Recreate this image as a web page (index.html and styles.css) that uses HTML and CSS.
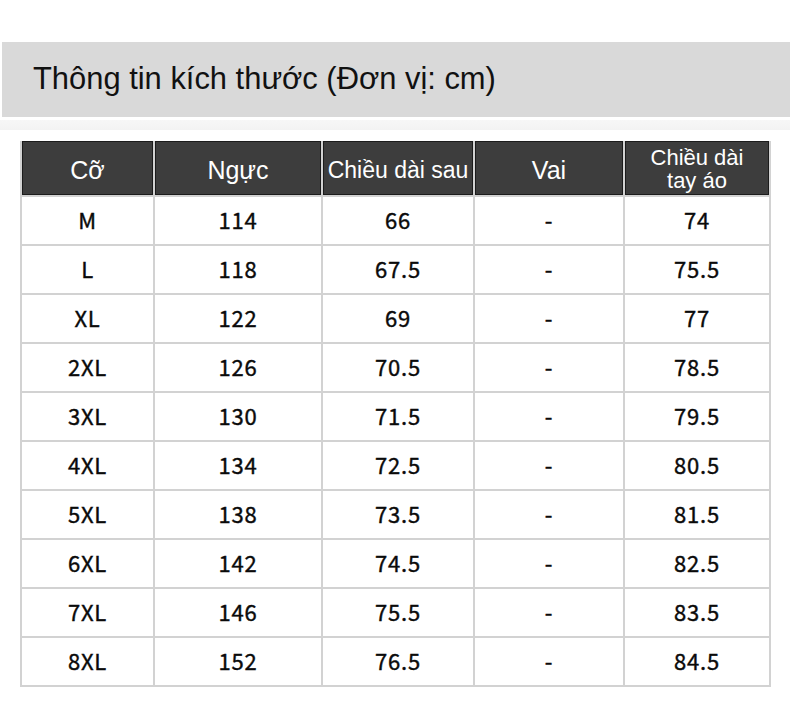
FILE: index.html
```html
<!DOCTYPE html>
<html lang="vi">
<head>
<meta charset="utf-8">
<title>Thông tin kích thước</title>
<link rel="stylesheet" href="styles.css">
</head>
<body>
<div class="page">
  <div class="title-band">
    <h1 class="title">Thông tin kích thước (Đơn vị: cm)</h1>
  </div>
  <div class="title-shadow"></div>
  <div class="size-table">
    <div class="th">Cỡ</div>
    <div class="th">Ngực</div>
    <div class="th th-sm">Chiều dài sau</div>
    <div class="th">Vai</div>
    <div class="th th-sm th-two">Chiều dài<br>tay áo</div>

    <div class="td">M</div><div class="td">114</div><div class="td">66</div><div class="td">-</div><div class="td">74</div>
    <div class="td">L</div><div class="td">118</div><div class="td">67.5</div><div class="td">-</div><div class="td">75.5</div>
    <div class="td">XL</div><div class="td">122</div><div class="td">69</div><div class="td">-</div><div class="td">77</div>
    <div class="td">2XL</div><div class="td">126</div><div class="td">70.5</div><div class="td">-</div><div class="td">78.5</div>
    <div class="td">3XL</div><div class="td">130</div><div class="td">71.5</div><div class="td">-</div><div class="td">79.5</div>
    <div class="td">4XL</div><div class="td">134</div><div class="td">72.5</div><div class="td">-</div><div class="td">80.5</div>
    <div class="td">5XL</div><div class="td">138</div><div class="td">73.5</div><div class="td">-</div><div class="td">81.5</div>
    <div class="td">6XL</div><div class="td">142</div><div class="td">74.5</div><div class="td">-</div><div class="td">82.5</div>
    <div class="td">7XL</div><div class="td">146</div><div class="td">75.5</div><div class="td">-</div><div class="td">83.5</div>
    <div class="td">8XL</div><div class="td">152</div><div class="td">76.5</div><div class="td">-</div><div class="td">84.5</div>
  </div>
</div>
</body>
</html>
```
FILE: styles.css
```css
* { box-sizing: border-box; }
html, body { margin: 0; padding: 0; background: #ffffff; }
.page {
  width: 790px;
  height: 708px;
  padding-top: 42px;
  overflow: hidden;
}
.title-band {
  margin-left: 2px;
  height: 75px;
  background: #d9d9d9;
  display: flex;
  align-items: center;
  padding-left: 31px;
}
.title {
  margin: 0;
  font-family: "Liberation Sans", Arial, sans-serif;
  font-weight: 400;
  font-size: 30.9px;
  color: #111111;
  padding-bottom: 1px;
}
.title-shadow {
  height: 10px;
  margin-top: 3px;
  background: linear-gradient(#f7f7f7, #f3f3f3);
}
.size-table {
  margin: 11px 0 0 20px;
  width: 751px;
  display: grid;
  grid-template-columns: 131px 166px 150px 148px 144px;
  grid-template-rows: 54px;
  grid-auto-rows: 47px;
  gap: 2px;
  padding: 0 2px 2px 2px;
  background: #d2d2d2;
}
.th {
  background: #3d3d3d;
  border: 1px solid #1c1c1c;
  color: #ffffff;
  font-family: "Liberation Sans", Arial, sans-serif;
  font-size: 25px;
  display: flex;
  align-items: center;
  justify-content: center;
  text-align: center;
  padding-top: 4px;
}
.th-sm { font-size: 23px; }
.th-two { line-height: 23px; padding-top: 1px; font-size: 22px; }
.td {
  background: #ffffff;
  color: #0a0a0a;
  font-family: "Noto Sans CJK SC", "Noto Sans", sans-serif;
  font-weight: 400;
  font-size: 22px;
  letter-spacing: 0.8px;
  -webkit-text-stroke: 0.4px #0a0a0a;
  display: flex;
  align-items: center;
  justify-content: center;
  padding-bottom: 4px;
}
```
